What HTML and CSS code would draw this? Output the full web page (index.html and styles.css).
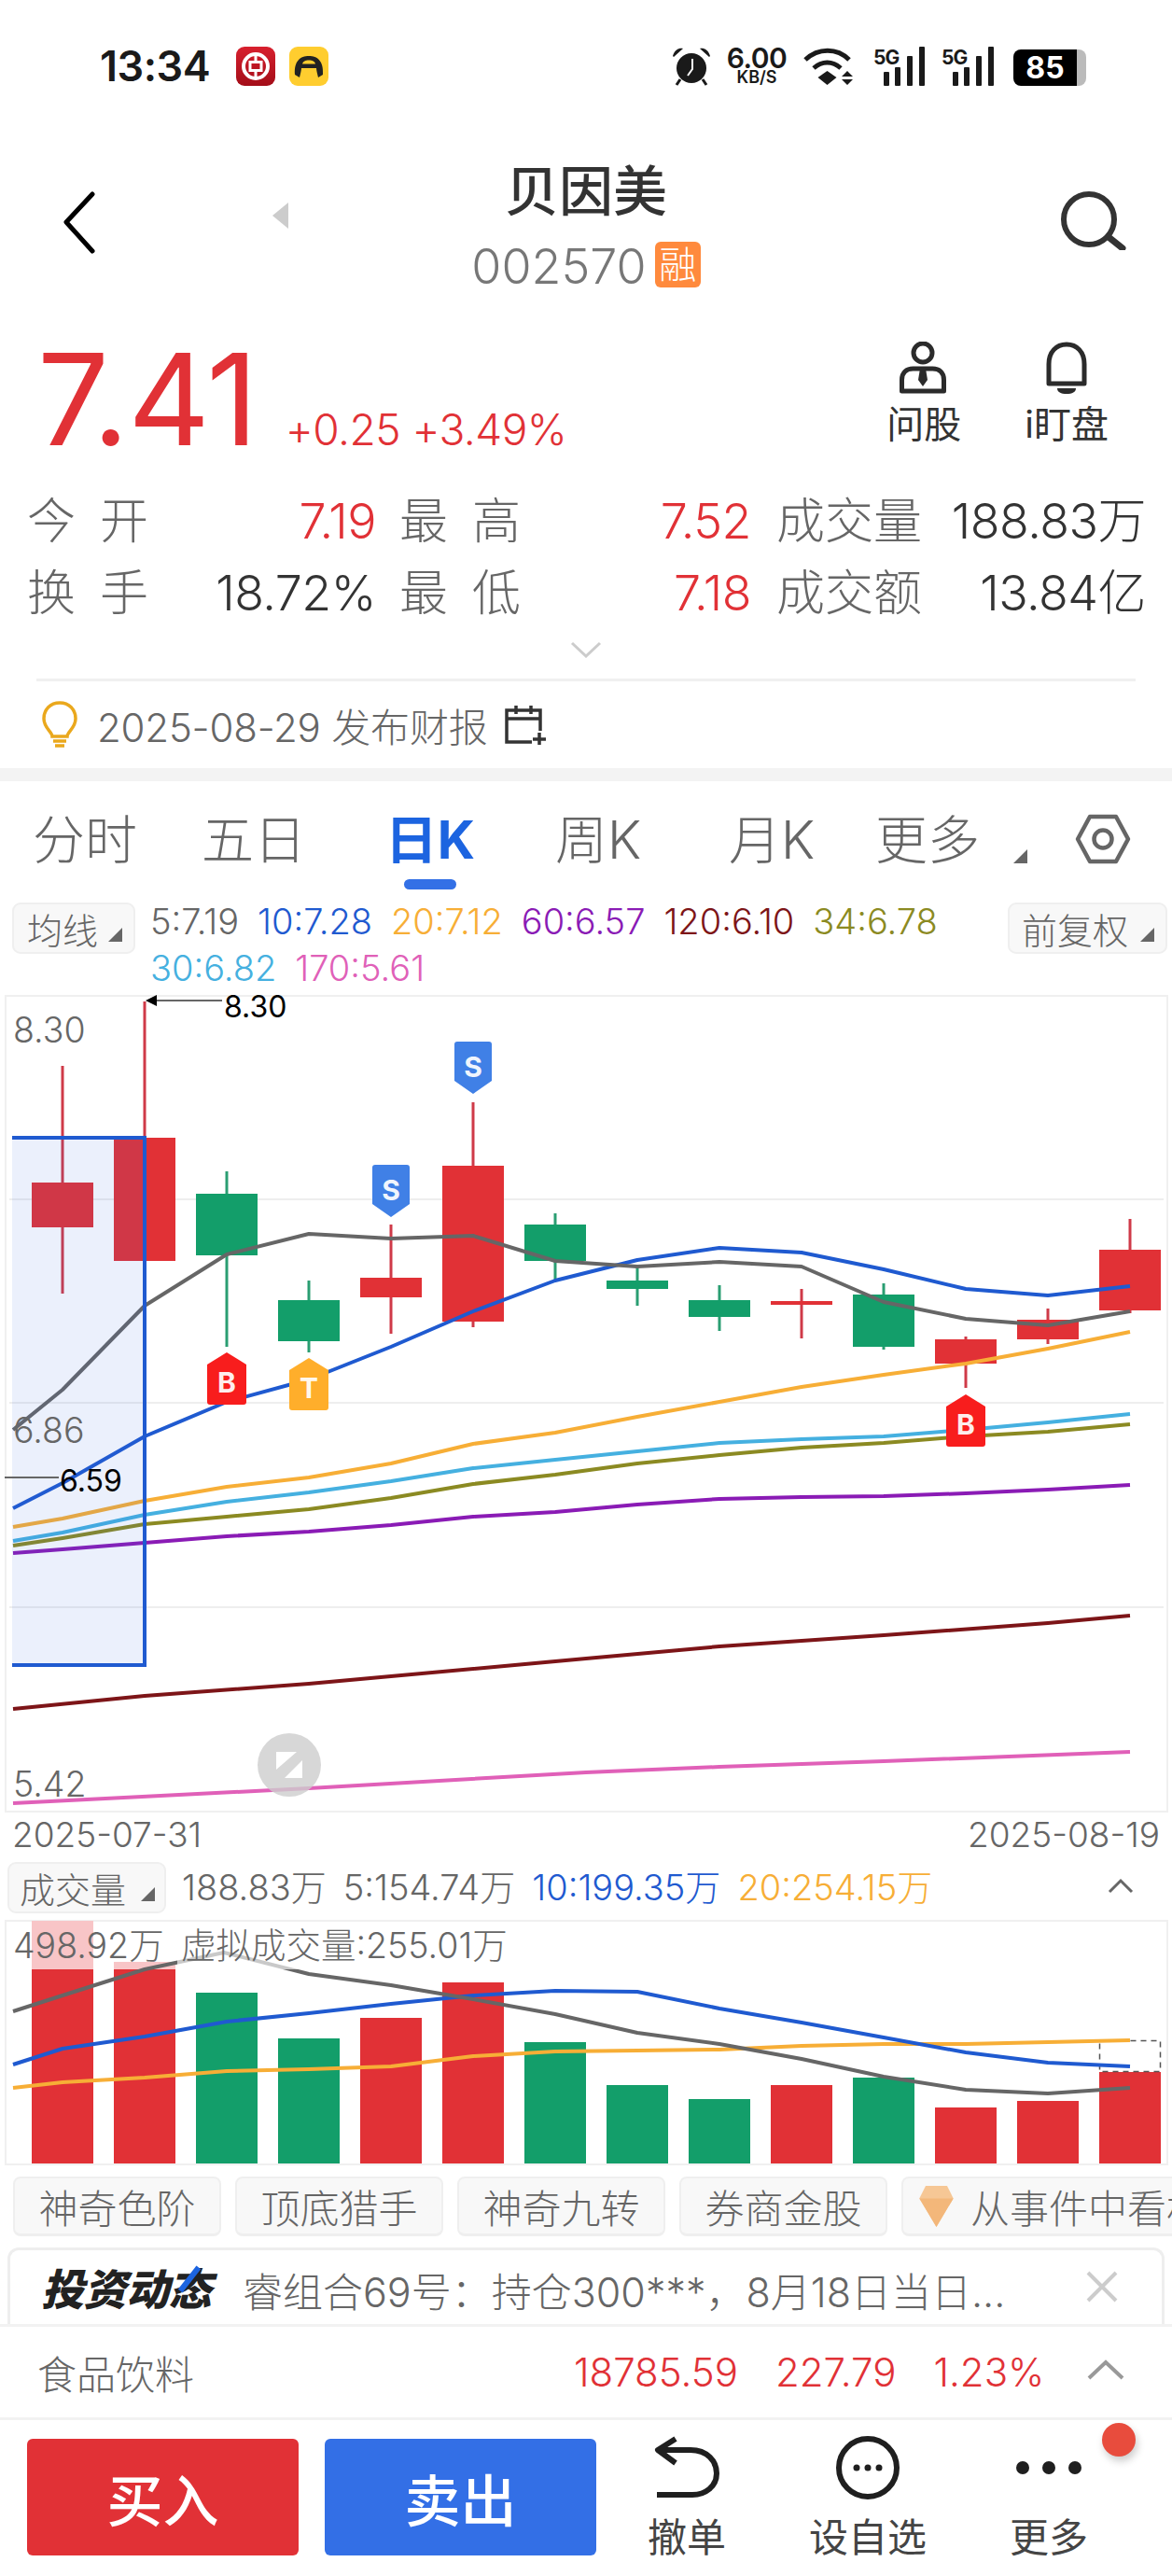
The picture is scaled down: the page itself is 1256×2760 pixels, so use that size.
FILE: index.html
```html
<!DOCTYPE html>
<html lang="zh-CN">
<head>
    <meta charset="UTF-8">
    <title>贝因美 002570</title>
    <link rel="stylesheet" href="styles.css">
</head>
<body>
<div id="page">

    <!-- status bar -->
    <div class="statusbar">
        <span class="clock">13:34</span>
        <svg class="app-icon" viewBox="0 0 42 42">
            <defs><linearGradient id="bocRed" x1="0" y1="0" x2="0" y2="1"><stop offset="0" stop-color="#d8202e"/><stop offset="1" stop-color="#a30d18"/></linearGradient></defs>
            <rect width="42" height="42" rx="9" fill="url(#bocRed)"/>
            <circle cx="21" cy="21" r="13" fill="none" stroke="#fff" stroke-width="4"/>
            <rect x="15" y="16.500" width="12" height="9" fill="none" stroke="#fff" stroke-width="3"/>
            <path d="M21 8v8M21 26v8" stroke="#fff" stroke-width="3"/>
        </svg>
        <svg class="app-icon app-icon-b" viewBox="0 0 42 42">
            <rect width="42" height="42" rx="9" fill="#ffcd2f"/>
            <path d="M6 30C5 15 12 10 21 10s16 5 15 20l-5 3c-1-4-2-8-2-10H13c0 2-1 6-2 10z" fill="#222"/>
            <path d="M14 18.500c1-3 3-4 7-4s6 1 7 4z" fill="#ffcd2f"/>
        </svg>
        <div class="status-right">
            <svg class="alarm" viewBox="0 0 42 42">
                <path d="M1 10C3 3 8 1 12 2L2 11zM41 10C39 3 34 1 30 2l10 9z" fill="#1a1a1a"/>
                <circle cx="21" cy="23" r="16" fill="#1a1a1a"/>
                <path d="M9 35l-4 6M33 35l4 6" stroke="#1a1a1a" stroke-width="3"/>
                <path d="M22 13v11l-5 7" fill="none" stroke="#fff" stroke-width="2"/>
            </svg>
            <div class="speed"><span class="speed-num">6.00</span><span class="speed-unit">KB/S</span></div>
            <svg class="wifi" viewBox="0 0 60 42">
                <path d="M3 14C17 1 37 1 50 14M12 23c9-8 20-8 29 0" fill="none" stroke="#1a1a1a" stroke-width="5"/>
                <path d="M26.500 26l10 7-10 8-10-8z" fill="#1a1a1a"/>
                <path d="M48 26l6 6H42zM48 41l6-6H42z" fill="#1a1a1a"/>
            </svg>
            <svg class="signal" viewBox="0 0 60 42">
                <text class="sig-text" x="4" y="19">5G</text>
                <rect x="15" y="27" width="6" height="15" rx="1" fill="#1a1a1a"/>
                <rect x="27" y="22" width="6" height="20" rx="1" fill="#1a1a1a"/>
                <rect x="40" y="10" width="6" height="32" rx="1" fill="#1a1a1a"/>
                <rect x="53" y="0" width="6" height="42" rx="1" fill="#1a1a1a"/>
            </svg>
            <svg class="signal signal-b" viewBox="0 0 62 42">
                <text class="sig-text" x="5" y="19">5G</text>
                <rect x="17" y="27" width="6" height="15" rx="1" fill="#1a1a1a"/>
                <rect x="29" y="22" width="6" height="20" rx="1" fill="#1a1a1a"/>
                <rect x="42" y="10" width="6" height="32" rx="1" fill="#1a1a1a"/>
                <rect x="55" y="0" width="6" height="42" rx="1" fill="#1a1a1a"/>
            </svg>
            <div class="battery"><span class="battery-num">85</span></div>
        </div>
    </div>

    <!-- title -->
    <div class="navbar">
        <div class="nav-left">
            <svg class="back" viewBox="0 0 37 67"><path d="M33 3L5 33l28 31" fill="none" stroke="#000" stroke-width="5" stroke-linecap="round" stroke-linejoin="round"/></svg>
            <span class="nav-prev"></span>
        </div>
        <div class="nav-center">
            <div class="stock-name">贝因美</div>
            <div class="stock-code">002570<span class="rong">融</span></div>
        </div>
        <div class="nav-right">
            <svg class="search" viewBox="0 0 72 64"><circle cx="31" cy="31" r="27" fill="none" stroke="#333" stroke-width="6"/><path d="M52 50l15 12" stroke="#333" stroke-width="7" stroke-linecap="round"/></svg>
        </div>
    </div>

    <!-- price -->
    <div class="quote">
        <span class="price">7.41</span>
        <span class="change">+0.25 +3.49%</span>
        <div class="quote-actions">
            <div class="action">
                <svg class="action-icon" viewBox="0 0 52 56">
                    <circle cx="25" cy="12" r="10" fill="none" stroke="#2b2b2b" stroke-width="5"/>
                    <path d="M2.500 53V41c0-8 5-12 12-12h21c7 0 12 4 12 12v12z" fill="none" stroke="#2b2b2b" stroke-width="5" stroke-linejoin="round"/>
                    <path d="M22 29h6l2 12-5 7-5-7z" fill="#2b2b2b"/>
                </svg>
                <span>问股</span>
            </div>
            <div class="action">
                <svg class="action-icon" viewBox="0 0 44 56">
                    <path d="M3 45V24C3 11 11 3 22 3s19 8 19 21v21z" fill="none" stroke="#2b2b2b" stroke-width="5" stroke-linejoin="round"/>
                    <path d="M12 50h20c0 4-4 6-10 6s-10-2-10-6z" fill="#2b2b2b"/>
                </svg>
                <span>i盯盘</span>
            </div>
        </div>
    </div>

    <!-- stats -->
    <div class="stats">
        <span class="label spaced left">今开</span><span class="value red">7.19</span>
        <span class="label spaced">最高</span><span class="value red">7.52</span>
        <span class="label">成交量</span><span class="value">188.83万</span>
        <span class="label spaced left">换手</span><span class="value">18.72%</span>
        <span class="label spaced">最低</span><span class="value red">7.18</span>
        <span class="label">成交额</span><span class="value">13.84亿</span>
    </div>
    <div class="expand">
        <svg class="expand-icon" viewBox="0 0 34 18"><path d="M2 2l15 14L32 2" fill="none" stroke="#ccc" stroke-width="3"/></svg>
    </div>

    <div class="notice">
        <svg class="bulb" viewBox="0 0 40 50">
            <path d="M12 38c0-5-9-9-9-19C3 9 10 2 20 2s17 7 17 17c0 10-9 14-9 19z" fill="none" stroke="#eaa81d" stroke-width="3.500"/>
            <path d="M13 43h14M15 48h10" stroke="#eaa81d" stroke-width="3.500"/>
        </svg>
        <span class="notice-text">2025-08-29 发布财报</span>
        <svg class="calendar" viewBox="0 0 46 44">
            <path d="M30 40H3V6h36v22M3 15h36M13 1v9M29 1v9" fill="none" stroke="#333" stroke-width="3.500"/>
            <path d="M38 30v13M31 37h14" stroke="#333" stroke-width="3.500"/>
        </svg>
    </div>
    <div class="band"></div>

    <!-- period tabs -->
    <div class="tabs">
        <span class="tab">分时</span>
        <span class="tab">五日</span>
        <span class="tab active">日K</span>
        <span class="tab">周K</span>
        <span class="tab">月K</span>
        <span class="tab">更多</span>
        <span class="corner tab-corner"></span>
        <svg class="hex" viewBox="0 0 60 54">
            <path d="M16 3h28l13 24-13 24H16L3 27z" fill="none" stroke="#666" stroke-width="4.500" stroke-linejoin="round"/>
            <circle cx="30" cy="27" r="9.500" fill="none" stroke="#666" stroke-width="4.500"/>
        </svg>
    </div>

    <!-- moving averages -->
    <div class="ma-row">
        <div class="chip chip-ma"><span>均线</span><span class="corner"></span></div>
        <div class="ma-legend">
            <span class="ma5">5:7.19</span>
            <span class="ma10">10:7.28</span>
            <span class="ma20">20:7.12</span>
            <span class="ma60">60:6.57</span>
            <span class="ma120">120:6.10</span>
            <span class="ma34">34:6.78</span>
            <span class="ma30">30:6.82</span>
            <span class="ma170">170:5.61</span>
        </div>
        <div class="chip chip-adj"><span>前复权</span><span class="corner"></span></div>
    </div>

    <!-- candles, coordinates are page pixels -->
    <svg class="kline" viewBox="0 1066 1256 876">
        <rect class="frame" x="6" y="1067" width="1245" height="874"/>
        <path class="grid" d="M10 1285H1247M10 1503H1247M10 1722H1247"/>

        <g class="wick-up">
            <rect x="65.500" y="1142" width="3" height="244"/>
            <rect x="153.500" y="1073" width="3" height="146"/>
            <rect x="417.500" y="1312" width="3" height="117"/>
            <rect x="505.500" y="1181" width="3" height="241"/>
            <rect x="857.500" y="1381" width="3" height="53"/>
            <rect x="1033.500" y="1432" width="3" height="55"/>
            <rect x="1121.500" y="1402" width="3" height="38"/>
            <rect x="1209.500" y="1306" width="3" height="101"/>
        </g>
        <g class="wick-dn">
            <rect x="241.500" y="1255" width="3" height="188"/>
            <rect x="329.500" y="1372" width="3" height="77"/>
            <rect x="593.500" y="1300" width="3" height="73"/>
            <rect x="681.500" y="1358" width="3" height="41"/>
            <rect x="769.500" y="1377" width="3" height="49"/>
            <rect x="945.500" y="1375" width="3" height="71"/>
        </g>
        <g class="up">
            <rect x="34" y="1267" width="66" height="48"/>
            <rect x="122" y="1219" width="66" height="132"/>
            <rect x="386" y="1369" width="66" height="21"/>
            <rect x="474" y="1249" width="66" height="167"/>
            <rect x="826" y="1394" width="66" height="4"/>
            <rect x="1002" y="1435" width="66" height="26"/>
            <rect x="1090" y="1414" width="66" height="21"/>
            <rect x="1178" y="1339" width="66" height="65"/>
        </g>
        <g class="dn">
            <rect x="210" y="1279" width="66" height="66"/>
            <rect x="298" y="1393" width="66" height="44"/>
            <rect x="562" y="1312" width="66" height="39"/>
            <rect x="650" y="1372" width="66" height="9"/>
            <rect x="738" y="1393" width="66" height="18"/>
            <rect x="914" y="1387" width="66" height="56"/>
        </g>

        <polyline class="l-170" points="14,1932 331,1916 628,1899 771,1893 947,1887 1211,1877"/>
        <polyline class="l-120" points="14,1831 155,1817 331,1804 419,1796 628,1777 771,1764 947,1752 1123,1739 1211,1731"/>
        <polyline class="l-60" points="14,1664 67,1660 155,1653 243,1646 331,1641 419,1634 507,1625 595,1620 683,1612 771,1606 859,1604 947,1603 1035,1600 1123,1596 1211,1591"/>
        <polyline class="l-34" points="14,1656 67,1648 155,1633 243,1625 331,1617 419,1605 507,1590 595,1580 683,1568 771,1559 859,1551 947,1546 1035,1539 1123,1534 1211,1526"/>
        <polyline class="l-30" points="14,1651 67,1642 155,1623 243,1609 331,1599 419,1587 507,1573 595,1564 683,1555 771,1546 859,1542 947,1539 1035,1532 1123,1524 1211,1515"/>
        <polyline class="l-20" points="14,1636 67,1627 155,1608 243,1593 331,1583 419,1568 507,1547 595,1535 683,1518 771,1502 859,1486 947,1473 1035,1461 1123,1445 1211,1427"/>
        <polyline class="l-10" points="14,1616 67,1589 155,1539 243,1502 331,1478 419,1443 507,1405 595,1372 683,1350 771,1337 859,1342 947,1360 1035,1381 1123,1388 1211,1378"/>
        <polyline class="l-5" points="14,1532 67,1489 155,1399 243,1344 331,1322 419,1327 507,1324 595,1351 683,1357 771,1352 859,1357 947,1395 1035,1413 1123,1420 1211,1405"/>

        <!-- selected range -->
        <path class="sel-fill" d="M13 1219H155V1784H13z"/>
        <path class="sel-line" d="M13 1219H155V1784H13"/>

        <!-- trade marks -->
        <path class="pin-s" d="M400 1248h36q3 0 3 3v39l-20 14-20-14v-39q0-3 3-3z"/>
        <text class="pin-text" x="419" y="1286">S</text>
        <path class="pin-s" d="M488 1116h36q3 0 3 3v39l-20 14-20-14v-39q0-3 3-3z"/>
        <text class="pin-text" x="507" y="1154">S</text>
        <path class="pin-b" d="M243 1449l21 13v40q0 3-3 3h-36q-3 0-3-3v-40z"/>
        <text class="pin-text" x="243" y="1492">B</text>
        <path class="pin-t" d="M331 1455l21 13v40q0 3-3 3h-36q-3 0-3-3v-40z"/>
        <text class="pin-text" x="331" y="1498">T</text>
        <path class="pin-b" d="M1035 1494l21 13v40q0 3-3 3h-36q-3 0-3-3v-40z"/>
        <text class="pin-text" x="1035" y="1537">B</text>

        <!-- high / low callouts -->
        <path class="call-line" d="M168 1072H238M5 1583H63"/>
        <path d="M156 1072l12-6v12z" fill="#000"/>
        <text class="call-text" x="240" y="1090">8.30</text>
        <text class="call-text" x="64" y="1598">6.59</text>

        <text class="axis-text" x="14" y="1117">8.30</text>
        <text class="axis-text" x="14" y="1546">6.86</text>
        <text class="axis-text" x="14" y="1925">5.42</text>

        <circle class="shrink" cx="310" cy="1891" r="34"/>
        <path d="M296 1877h22l-22 19zM324 1886v19h-19z" fill="#fff"/>
    </svg>

    <div class="dates">
        <span>2025-07-31</span>
        <span>2025-08-19</span>
    </div>

    <!-- volume -->
    <div class="vol-head">
        <div class="chip chip-vol"><span>成交量</span><span class="corner"></span></div>
        <div class="vol-legend">
            <span class="ma5">188.83万</span>
            <span class="ma5">5:154.74万</span>
            <span class="ma10">10:199.35万</span>
            <span class="ma20">20:254.15万</span>
        </div>
        <svg class="vol-caret" viewBox="0 0 28 17"><path d="M2 15L14 3l12 12" fill="none" stroke="#666" stroke-width="3"/></svg>
    </div>

    <svg class="volume" viewBox="0 2057 1256 263">
        <rect class="frame" x="6" y="2058" width="1245" height="261"/>
        <rect class="over" x="34" y="2058" width="66" height="52"/>
        <rect class="over" x="122" y="2102" width="66" height="8"/>
        <g class="up">
            <rect x="34" y="2110" width="66" height="208"/>
            <rect x="122" y="2110" width="66" height="208"/>
            <rect x="386" y="2162" width="66" height="156"/>
            <rect x="474" y="2124" width="66" height="194"/>
            <rect x="826" y="2234" width="66" height="84"/>
            <rect x="1002" y="2258" width="66" height="60"/>
            <rect x="1090" y="2251" width="66" height="67"/>
            <rect x="1178" y="2220" width="66" height="98"/>
        </g>
        <g class="dn">
            <rect x="210" y="2135" width="66" height="183"/>
            <rect x="298" y="2184" width="66" height="134"/>
            <rect x="562" y="2188" width="66" height="130"/>
            <rect x="650" y="2234" width="66" height="84"/>
            <rect x="738" y="2249" width="66" height="69"/>
            <rect x="914" y="2226" width="66" height="92"/>
        </g>
        <rect class="vol-ghost" x="1178.500" y="2186.500" width="65" height="33"/>
        <polyline class="l-20" points="14,2237 67,2231 155,2226 243,2219 331,2217 419,2214 507,2203 595,2198 683,2197 771,2196 859,2192 947,2190 1035,2190 1123,2188 1211,2186"/>
        <polyline class="l-10" points="14,2212 67,2195 155,2182 243,2166 331,2157 419,2147 507,2138 595,2133 683,2134 771,2152 859,2167 947,2183 1035,2199 1123,2210 1211,2214"/>
        <polyline class="l-5" points="14,2155 67,2138 155,2110 240,2092 331,2115 419,2127 507,2142 595,2158 683,2178 771,2190 859,2206 947,2225 1035,2239 1123,2243 1211,2237"/>
        <rect class="vol-veil" x="190" y="2064" width="362" height="46"/>
        <text class="axis-text" x="14" y="2098">498.92万</text>
        <text class="axis-text" x="194" y="2098">虚拟成交量:255.01万</text>
    </svg>

    <!-- strategy pills -->
    <div class="pills">
        <span class="pill">神奇色阶</span>
        <span class="pill">顶底猎手</span>
        <span class="pill">神奇九转</span>
        <span class="pill">券商金股</span>
        <span class="pill pill-event">
            <svg class="gem" viewBox="0 0 40 48">
                <path d="M8 1h24l7 14-19 32L1 15z" fill="#f6c795"/>
                <path d="M1 15h38L20 47z" fill="#f3b77a"/>
            </svg>从事件中看机会
        </span>
    </div>

    <div class="invest">
        <div class="invest-logo">投资动态<span class="logo-slash"></span></div>
        <span class="invest-text">睿组合69号：持仓300***，8月18日当日...</span>
        <svg class="invest-close" viewBox="0 0 34 34"><path d="M2 2l30 30M32 2L2 32" stroke="#ccc" stroke-width="4"/></svg>
    </div>

    <div class="industry">
        <span class="industry-name">食品饮料</span>
        <span class="industry-num">18785.59</span>
        <span class="industry-num n2">227.79</span>
        <span class="industry-num n3">1.23%</span>
        <svg class="industry-caret" viewBox="0 0 42 22"><path d="M3 20L21 3l18 17" fill="none" stroke="#999" stroke-width="4"/></svg>
    </div>

    <!-- trade bar -->
    <div class="trade">
        <div class="btn btn-buy">买入</div>
        <div class="btn btn-sell">卖出</div>
        <div class="tool">
            <svg class="tool-icon" viewBox="0 0 76 68">
                <path d="M26 3L7 15l19 14" fill="none" stroke="#1f1f1f" stroke-width="6" stroke-linejoin="round"/>
                <path d="M8 15H42C60 15 70 27 70 40C70 54 58 63 44 63H6" fill="none" stroke="#1f1f1f" stroke-width="6"/>
            </svg>
            <span>撤单</span>
        </div>
        <div class="tool">
            <svg class="tool-icon" viewBox="0 0 76 68">
                <circle cx="38" cy="34" r="31" fill="none" stroke="#1f1f1f" stroke-width="6"/>
                <circle cx="26" cy="34" r="3.500" fill="#1f1f1f"/><circle cx="38" cy="34" r="3.500" fill="#1f1f1f"/><circle cx="50" cy="34" r="3.500" fill="#1f1f1f"/>
            </svg>
            <span>设自选</span>
        </div>
        <div class="tool">
            <svg class="tool-icon" viewBox="0 0 76 68">
                <circle cx="10" cy="34" r="7" fill="#1f1f1f"/><circle cx="38" cy="34" r="7" fill="#1f1f1f"/><circle cx="66" cy="34" r="7" fill="#1f1f1f"/>
            </svg>
            <span>更多</span>
        </div>
        <span class="red-dot"></span>
    </div>

</div>
</body>
</html>
```

FILE: styles.css
```css
* {
    box-sizing: border-box;
}

body {
    margin: 0;
    background: #fff;
    font-family: Inter, "Noto Sans CJK SC", sans-serif;
    color: #333;
}

#page {
    width: 1256px;
    height: 2760px;
    overflow: hidden;
}

/* status bar */
.statusbar {
    display: flex;
    align-items: flex-start;
    height: 150px;
    padding-top: 50px;
    padding-left: 107px;
}

.clock {
    font-size: 45px;
    font-weight: 600;
    line-height: 42px;
    letter-spacing: -0.5px;
    color: #1a1a1a;
    width: 146px;
}

.app-icon {
    width: 42px;
    height: 42px;
}

.app-icon-b {
    margin-left: 15px;
}

.status-right {
    display: flex;
    gap: 12px;
    margin-left: auto;
    margin-right: 92px;
}

.alarm {
    width: 42px;
    height: 42px;
}

.speed {
    display: flex;
    flex-direction: column;
    align-items: center;
    width: 74px;
    height: 42px;
    color: #1a1a1a;
    font-weight: 600;
}

.speed-num {
    font-size: 30px;
    line-height: 24px;
    letter-spacing: -0.5px;
}

.speed-unit {
    font-size: 18px;
    line-height: 18px;
}

.wifi {
    width: 60px;
    height: 42px;
}

.signal {
    width: 60px;
    height: 42px;
}

.signal-b {
    width: 62px;
}

.sig-text {
    font-size: 21px;
    font-weight: 700;
    letter-spacing: -1px;
    fill: #1a1a1a;
}

.battery {
    display: flex;
    align-items: center;
    justify-content: center;
    width: 78px;
    height: 39px;
    margin-top: 3px;
    margin-left: 8px;
    border-radius: 8px;
    background: linear-gradient(to right, #000 87%, #bbb 87%);
}

.battery-num {
    color: #fff;
    font-size: 32px;
    font-weight: 700;
    margin-right: 10px;
}

/* title */
.navbar {
    display: grid;
    grid-template-columns: 1fr auto 1fr;
    height: 205px;
    padding-top: 20px;
}

.nav-left {
    display: flex;
    align-items: flex-start;
    padding-left: 66px;
}

.back {
    width: 37px;
    height: 67px;
    margin-top: 35px;
}

.nav-prev {
    width: 17px;
    height: 28px;
    margin-top: 47px;
    margin-left: 189px;
    background: #ccc;
    clip-path: polygon(100% 0, 100% 100%, 0 50%);
}

.nav-center {
    display: flex;
    flex-direction: column;
    align-items: center;
}

.stock-name {
    font-size: 58px;
    font-weight: 500;
    line-height: 70px;
    color: #333;
}

.stock-code {
    display: flex;
    align-items: center;
    margin-top: 16px;
    font-size: 52px;
    font-weight: 300;
    line-height: 60px;
    color: #777;
}

.rong {
    display: flex;
    align-items: center;
    justify-content: center;
    width: 49px;
    height: 49px;
    margin-left: 9px;
    margin-top: -5px;
    border-radius: 6px;
    background: #ff8a3d;
    color: #fff;
    font-size: 40px;
    line-height: 49px;
}

.nav-right {
    display: flex;
    justify-content: flex-end;
    align-items: flex-start;
    padding-right: 48px;
}

.search {
    width: 72px;
    height: 64px;
    margin-top: 34px;
}

/* price */
.quote {
    display: flex;
    align-items: baseline;
    height: 145px;
    padding-left: 40px;
}

.price {
    font-size: 136px;
    font-weight: 400;
    line-height: 145px;
    letter-spacing: -1px;
    color: #e13136;
}

.change {
    margin-left: 30px;
    font-size: 46px;
    font-weight: 300;
    letter-spacing: -0.5px;
    color: #e13136;
}

.quote-actions {
    display: flex;
    align-self: flex-start;
    gap: 68px;
    margin-left: auto;
    margin-right: 68px;
    margin-top: 11px;
}

.action {
    display: flex;
    flex-direction: column;
    align-items: center;
    font-size: 40px;
    line-height: 50px;
    color: #333;
}

.action-icon {
    height: 56px;
    margin-bottom: 8px;
}

/* stats */
.stats {
    display: grid;
    grid-template-columns: 157px 246px 155px 247px 183px 240px;
    grid-auto-rows: 77px;
    align-items: center;
    padding-top: 20px;
    font-size: 52px;
    line-height: 77px;
}

.label {
    color: #666;
    font-weight: 300;
    text-align: right;
    white-space: nowrap;
}

.label.spaced {
    letter-spacing: 26px;
    margin-right: -26px;
}

.label.left {
    padding-left: 29px;
    text-align: left;
    margin-right: 0;
}

.value {
    font-weight: 300;
    letter-spacing: -0.5px;
    text-align: right;
    white-space: nowrap;
    color: #333;
}

.value.red {
    color: #e13136;
}

.expand {
    display: flex;
    justify-content: center;
    height: 56px;
    padding-top: 13px;
    border-bottom: 3px solid #f0f0f0;
    margin: 0 39px;
}

.expand-icon {
    width: 34px;
    height: 18px;
}

.notice {
    display: flex;
    align-items: center;
    height: 93px;
    padding-left: 44px;
}

.bulb {
    width: 40px;
    height: 50px;
    margin-top: -2px;
}

.notice-text {
    margin-left: 20px;
    font-size: 42px;
    font-weight: 300;
    letter-spacing: -0.2px;
    color: #666;
}

.calendar {
    width: 46px;
    height: 44px;
    margin-left: 17px;
}

.band {
    height: 14px;
    background: #f3f3f3;
}

/* tabs */
.tabs {
    display: grid;
    grid-template-columns: 182px 180px 198px 162px 210px 124px 33px 63px 58px;
    height: 116px;
    padding-top: 28px;
}

.tab {
    text-align: center;
    font-size: 56px;
    font-weight: 300;
    line-height: 70px;
    color: #666;
}

.tab.active {
    color: #1c64e0;
    font-weight: 700;
}

.tab.active::after {
    content: "";
    display: block;
    width: 56px;
    height: 11px;
    margin: 7px auto 0;
    border-radius: 6px;
    background: #3370e6;
}

.corner {
    display: inline-block;
    width: 15px;
    height: 15px;
    background: #666;
    clip-path: polygon(100% 0, 100% 100%, 0 100%);
}

.tab-corner {
    grid-column: 8;
    margin-top: 45px;
    margin-left: -3px;
}

.hex {
    grid-column: 9;
    width: 60px;
    height: 54px;
    margin-top: 7px;
}

/* moving average legend */
.ma-row {
    display: flex;
    align-items: flex-start;
    height: 113px;
    padding-top: 14px;
}

.chip {
    display: flex;
    align-items: center;
    justify-content: space-between;
    height: 55px;
    border: 2px solid #efefef;
    border-radius: 9px;
    background: #f8f8f8;
    color: #666;
    font-size: 38px;
    font-weight: 300;
}

.chip-ma {
    width: 132px;
    margin-left: 13px;
    padding: 0 12px 0 14px;
}

.chip-adj {
    width: 171px;
    margin-left: auto;
    margin-right: 5px;
    padding: 0 12px 0 13px;
}

.chip .corner {
    margin-top: 14px;
}

.ma-legend {
    display: flex;
    flex-wrap: wrap;
    column-gap: 20px;
    width: 900px;
    margin-left: 16px;
    margin-top: -5px;
    font-size: 38px;
    font-weight: 300;
    line-height: 50px;
}

.ma5 { color: #666; }
.ma10 { color: #1f5ad0; }
.ma20 { color: #f7ae36; }
.ma60 { color: #8a1bb5; }
.ma120 { color: #7d1518; }
.ma34 { color: #8b8a22; }
.ma30 { color: #45b0e0; }
.ma170 { color: #e060b8; }

/* charts */
.kline {
    display: block;
    width: 1256px;
    height: 876px;
    overflow: visible;
}

.volume {
    display: block;
    width: 1256px;
    height: 263px;
}

.frame {
    fill: none;
    stroke: #f0f0f0;
    stroke-width: 2;
}

.grid {
    stroke: #eee;
    stroke-width: 2;
}

.up { fill: #e13136; }
.dn { fill: #139e6a; }
.wick-up { fill: #cf3a48; }
.wick-dn { fill: #2a9e72; }
.over { fill: #f8c5c7; }

polyline {
    fill: none;
    stroke-width: 4;
    stroke-linejoin: round;
}

.l-5 { stroke: #666; }
.l-10 { stroke: #1f5ad0; }
.l-20 { stroke: #f7ae36; }
.l-30 { stroke: #45b0e0; }
.l-34 { stroke: #8b8a22; }
.l-60 { stroke: #8a1bb5; }
.l-120 { stroke: #7d1518; }
.l-170 { stroke: #e060b8; }

.sel-fill {
    fill: rgba(60, 110, 230, 0.1);
}

.sel-line {
    fill: none;
    stroke: #1f5ad0;
    stroke-width: 4;
}

.pin-s { fill: #4080e6; }
.pin-b { fill: #f81d1d; }
.pin-t { fill: #ffae2b; }

.pin-text {
    fill: #fff;
    font-size: 30px;
    font-weight: 700;
    text-anchor: middle;
    opacity: 0.92;
}

.call-line {
    stroke: #666;
    stroke-width: 2;
}

.call-text {
    font-size: 32px;
    font-weight: 400;
    fill: #000;
}

.axis-text {
    font-size: 37.500px;
    font-weight: 300;
    fill: #666;
}

.shrink {
    fill: rgba(205, 205, 205, 0.8);
}

.vol-ghost {
    fill: #fff;
    stroke: #555;
    stroke-width: 1.500;
    stroke-dasharray: 6 5;
}

.vol-veil {
    fill: rgba(255, 255, 255, 0.65);
}

.dates {
    display: flex;
    justify-content: space-between;
    height: 53px;
    padding: 0 13px;
    font-size: 37px;
    font-weight: 300;
    line-height: 48px;
    color: #666;
}

.vol-head {
    display: flex;
    align-items: flex-start;
    height: 62px;
}

.chip-vol {
    width: 170px;
    margin-left: 8px;
    padding: 0 10px 0 11px;
}

.vol-legend {
    display: flex;
    gap: 18px;
    margin-left: 17px;
    font-size: 38px;
    font-weight: 300;
    line-height: 55px;
    white-space: nowrap;
}

.vol-caret {
    width: 28px;
    height: 17px;
    margin-left: auto;
    margin-right: 41px;
    margin-top: 17px;
}

/* pills */
.pills {
    display: flex;
    gap: 15px;
    height: 88px;
    padding-top: 12px;
    padding-left: 14px;
    overflow: hidden;
}

.pill {
    display: flex;
    flex: none;
    align-items: center;
    justify-content: center;
    gap: 17px;
    width: 223px;
    height: 64px;
    border: 2px solid #efefef;
    border-bottom-width: 3px;
    border-radius: 8px;
    background: #f8f8f8;
    color: #666;
    font-size: 42px;
    font-weight: 300;
    white-space: nowrap;
}

.pill-event {
    width: 420px;
    justify-content: flex-start;
    padding-left: 16px;
}

.gem {
    width: 39px;
    height: 46px;
}

.invest {
    display: flex;
    align-items: center;
    height: 82px;
    margin: 0 8px;
    padding-left: 33px;
    padding-top: 4px;
    border: 3px solid #eee;
    border-bottom: none;
    border-radius: 12px 12px 0 0;
}

.invest-logo {
    position: relative;
    font-size: 46px;
    font-weight: 900;
    font-style: italic;
    line-height: 60px;
    letter-spacing: -0.5px;
    color: #222;
}

.logo-slash {
    position: absolute;
    left: 156px;
    top: 3px;
    width: 6px;
    height: 32px;
    background: #1c64e0;
    transform: rotate(38deg);
}

.invest-text {
    margin-left: 34px;
    font-size: 43px;
    font-weight: 300;
    color: #666;
    white-space: nowrap;
}

.invest-close {
    width: 34px;
    height: 34px;
    margin-left: auto;
    margin-right: 47px;
    margin-top: -6px;
}

.industry {
    display: flex;
    align-items: center;
    height: 103px;
    padding-left: 40px;
    border-top: 3px solid #f2f2f2;
    border-bottom: 3px solid #f2f2f2;
    font-size: 42px;
    font-weight: 300;
}

.industry-name {
    color: #666;
    width: 575px;
}

.industry-num {
    color: #e13136;
}

.n2 {
    margin-left: 40px;
}

.n3 {
    margin-left: 40px;
}

.industry-caret {
    width: 42px;
    height: 22px;
    margin-left: auto;
    margin-right: 50px;
    margin-top: -6px;
}

/* trade bar */
.trade {
    display: grid;
    position: relative;
    grid-template-columns: 291px 319px 194px 194px 194px;
    height: 170px;
    padding-top: 20px;
    padding-left: 29px;
}

.btn {
    display: flex;
    align-items: center;
    justify-content: center;
    height: 125px;
    border-radius: 6px;
    color: #fff;
    font-size: 60px;
    font-weight: 500;
}

.btn-buy {
    background: #e13136;
}

.btn-sell {
    margin-left: 28px;
    background: #336fe6;
}

.tool {
    display: flex;
    flex-direction: column;
    align-items: center;
    margin-top: -3px;
    font-size: 42px;
    font-weight: 400;
    line-height: 50px;
    color: #444;
}

.tool-icon {
    width: 76px;
    height: 68px;
    margin-bottom: 16px;
}

.red-dot {
    position: absolute;
    left: 1181px;
    top: 3px;
    width: 36px;
    height: 36px;
    border-radius: 50%;
    background: #e84c3d;
    box-shadow: 2px 5px 8px rgba(0, 0, 0, 0.2);
}
```
